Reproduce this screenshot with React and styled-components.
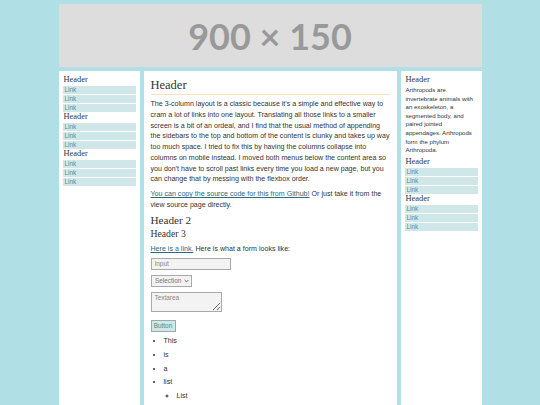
import React from "react";
import styled, { createGlobalStyle } from "styled-components";

const GlobalStyle = createGlobalStyle`
  html, body {
    margin: 0;
    padding: 0;
    background: #b0e0e6;
  }
  body {
    font-family: "Liberation Sans", Arial, sans-serif;
    color: #333;
  }
`;

const menus = [
  ["Link", "Link", "Link"],
  ["Link", "Link", "Link"],
  ["Link", "Link", "Link"],
];

export default function App() {
  return (
    <>
      <GlobalStyle />
      <Page>
        <Banner>900 × 150</Banner>
        <Columns>
          <Sidebar>
            {menus.map((links, i) => (
              <Menu key={i}>
                <SideHeader>Header</SideHeader>
                {links.map((l, j) => (
                  <MenuLink key={j} href="#">
                    {l}
                  </MenuLink>
                ))}
              </Menu>
            ))}
          </Sidebar>

          <Main>
            <Title>Header</Title>
            <Text>
              The 3-column layout is a classic because it's a simple and
              effective way to cram a lot of links into one layout.
              Translating all those links to a smaller screen is a bit of an
              ordeal, and I find that the usual method of appending the
              sidebars to the top and bottom of the content is clunky and
              takes up way too much space. I tried to fix this by having the
              columns collapse into columns on mobile instead. I moved both
              menus below the content area so you don't have to scroll past
              links every time you load a new page, but you can change that by
              messing with the flexbox order.
            </Text>
            <Text>
              <TextLink href="#">You can copy the source code for this from Github!</TextLink>{" "}
              Or just take it from the view source page directly.
            </Text>
            <SubTitle>Header 2</SubTitle>
            <SmallTitle>Header 3</SmallTitle>
            <Text>
              <TextLink href="#">Here is a link.</TextLink> Here is what a form
              looks like:
            </Text>
            <Form onSubmit={(e) => e.preventDefault()}>
              <Input placeholder="Input" />
              <SelectWrap>
                <Select defaultValue="">
                  <option value="">Selection</option>
                </Select>
                <Chevron width="5" height="4" viewBox="0 0 5 4">
                  <path d="M0.6 1 L2.5 2.9 L4.4 1" fill="none" stroke="#555" strokeWidth="0.9" />
                </Chevron>
              </SelectWrap>
              <TextArea placeholder="Textarea" />
              <Button type="button">Button</Button>
            </Form>
            <List>
              <li>This</li>
              <li>is</li>
              <li>a</li>
              <li>
                list
                <SubList>
                  <li>List</li>
                  <li>List</li>
                </SubList>
              </li>
            </List>
          </Main>

          <Sidebar>
            <SideHeader>Header</SideHeader>
            <SideText>
              Arthropods are invertebrate animals with an exoskeleton, a
              segmented body, and paired jointed appendages. Arthropods form
              the phylum Arthropoda.
            </SideText>
            {menus.slice(0, 2).map((links, i) => (
              <Menu key={i}>
                <SideHeader>Header</SideHeader>
                {links.map((l, j) => (
                  <MenuLink key={j} href="#">
                    {l}
                  </MenuLink>
                ))}
              </Menu>
            ))}
          </Sidebar>
        </Columns>
      </Page>
    </>
  );
}

const Page = styled.div`
  width: 423px;
  margin: 4px auto 0;
`;

const Banner = styled.div`
  height: 63px;
  background: #dddddd;
  color: #999999;
  font-family: Lato, "Open Sans", sans-serif;
  font-weight: 700;
  font-size: 36px;
  display: flex;
  align-items: center;
  justify-content: center;
`;

const Columns = styled.div`
  display: flex;
  gap: 4px;
  margin-top: 4px;
  min-height: 360px;
`;

const Sidebar = styled.aside`
  width: 81px;
  flex: none;
  background: #fff;
  padding: 4px 4px 0 5px;
  box-sizing: border-box;
`;

const Menu = styled.nav`
  display: flex;
  flex-direction: column;
  gap: 1px;
`;

const SideHeader = styled.h4`
  margin: 0;
  font-family: "Liberation Serif", "Times New Roman", serif;
  font-weight: 400;
  font-size: 8.4px;
  line-height: 10px;
  color: #333;
`;

const MenuLink = styled.a`
  display: block;
  height: 8px;
  line-height: 8px;
  padding-left: 2px;
  margin-left: -1px;
  background: #cfe7e8;
  color: #5b8f92;
  font-size: 6.4px;
  text-decoration: none;
`;

const SideText = styled.p`
  margin: 1px 0 2px;
  font-size: 6.1px;
  line-height: 8.6px;
  color: #333;
`;

const Main = styled.main`
  flex: 1;
  background: #fff;
  padding: 7px 7px 0;
  box-sizing: border-box;
  min-width: 0;
`;

const Title = styled.h1`
  margin: 0;
  padding-bottom: 1px;
  font-family: "Liberation Serif", "Times New Roman", serif;
  font-weight: 400;
  font-size: 12.5px;
  line-height: normal;
  border-bottom: 1px solid #fbe0c4;
`;

const SubTitle = styled.h2`
  margin: 1.5px 0 0;
  font-family: "Liberation Serif", "Times New Roman", serif;
  font-weight: 400;
  font-size: 11.2px;
  line-height: normal;
`;

const SmallTitle = styled.h3`
  margin: 1.5px 0 5px;
  font-family: "Liberation Serif", "Times New Roman", serif;
  font-weight: 400;
  font-size: 9.7px;
  line-height: normal;
`;

const Text = styled.p`
  margin: 4px 0 3.5px;
  font-size: 7.1px;
  line-height: 10.75px;
`;

const TextLink = styled.a`
  color: #2b6b7b;
  text-decoration: underline;
`;

const Form = styled.form`
  display: flex;
  flex-direction: column;
  align-items: flex-start;
  gap: 4.8px;
  margin-top: 3.5px;
`;

const fieldBase = `
  box-sizing: border-box;
  margin: 0;
  background: #f3f3f3;
  border: 1px solid #a9a9a9;
  border-radius: 0;
  font-family: "Liberation Sans", Arial, sans-serif;
  font-size: 6.4px;
  color: #777;
  outline: none;
  &::placeholder {
    color: #888;
  }
`;

const Input = styled.input`
  ${fieldBase}
  width: 80px;
  height: 12.3px;
  padding: 0 3px;
`;

const SelectWrap = styled.div`
  position: relative;
  display: flex;
  width: 41px;
  height: 12.3px;
`;

const Select = styled.select`
  ${fieldBase}
  appearance: none;
  width: 41px;
  height: 12.3px;
  padding: 0 0 0 3.5px;
  color: #777;
`;

const Chevron = styled.svg`
  position: absolute;
  right: 2.5px;
  top: 4.3px;
  pointer-events: none;
`;

const TextArea = styled.textarea`
  ${fieldBase}
  display: block;
  width: 71px;
  height: 20px;
  padding: 1px 3px;
  resize: both;
`;

const Button = styled.button`
  box-sizing: border-box;
  margin-top: 2.8px;
  width: 25px;
  height: 12.7px;
  padding: 0;
  background: #cfe7e8;
  border: 1px solid #9aa9aa;
  border-radius: 0;
  font-family: "Liberation Sans", Arial, sans-serif;
  font-size: 6.4px;
  color: #5a8486;
`;

const List = styled.ul`
  margin: 4px 0 0;
  padding-left: 13px;
  font-size: 7.1px;
  line-height: 10.75px;
  li {
    margin-bottom: 2.9px;
  }
`;

const SubList = styled.ul`
  margin: 2.9px 0 0;
  padding-left: 13px;
  list-style-type: circle;
`;
